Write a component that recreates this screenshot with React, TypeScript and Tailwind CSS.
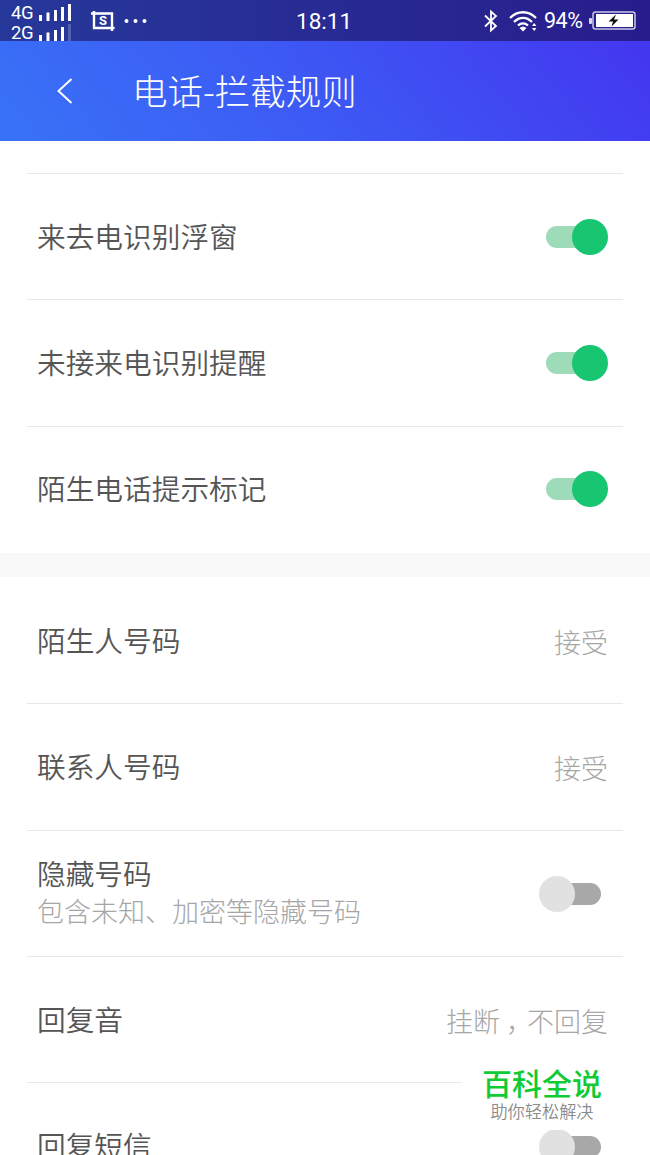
import type { ReactNode } from "react"

type RowProps = {
	label: string
	hint?: string
	value?: ReactNode
	checked?: boolean
	first?: boolean
}

const Toggle = ({ checked }: { checked: boolean }) => {
	if (checked) {
		return (
			<div className="relative mr-px flex h-9 w-[62px] items-center">
				<div className="h-[22px] w-[50px] rounded-full bg-[#9ddbb9]"></div>
				<div className="absolute right-0 size-9 rounded-full bg-[#18c571]"></div>
			</div>
		)
	}
	return (
		<div className="relative mt-px mr-2 flex h-9 w-[62px] items-center justify-end">
			<div className="h-[22px] w-[50px] rounded-full bg-[#a8a8a8]"></div>
			<div className="absolute left-0 size-9 rounded-full bg-[#e1e1e1]"></div>
		</div>
	)
}

const Row = ({ label, hint, value, checked, first }: RowProps) => {
	return (
		<div className={`flex h-[126.35px] shrink-0 items-center justify-between border-t pr-[14px] pl-[10px] ${first ? "border-transparent" : "border-[#e8e8e8]"}`}>
			<div className="pb-[2px]">
				<p className="text-[28.7px] leading-[38px] font-[350] text-[#555]">{label}</p>
				{hint && <p className="text-[27px] leading-[38px] text-[#a6a6a6]">{hint}</p>}
			</div>
			{value && <span className="mr-px pt-[2px] text-[27px] leading-[38px] text-[#a6a6a6]">{value}</span>}
			{checked !== undefined && <Toggle checked={checked} />}
		</div>
	)
}

const Signal = ({ name, weak }: { name: string, weak?: boolean }) => {
	return (
		<div className="flex h-5 items-center gap-[6px]">
			<span className="w-[23px] text-right text-[18.5px] leading-5 tracking-[-0.5px]">{name}</span>
			<svg width="33" height="18" viewBox="0 0 33 18" fill="currentColor">
				<rect x="0" y="11" width="3" height="6" />
				<rect x="7.500" y="8.500" width="3" height="8.500" />
				<rect x="15" y="6" width="3" height="11" />
				<rect x="22" y="3" width="3" height="14" />
				<rect x="29" y="0" width="3" height="17" opacity={weak ? 0.22 : 1} />
			</svg>
		</div>
	)
}

const StatusBar = () => {
	return (
		<div className="relative flex h-[41px] items-center justify-between bg-linear-to-r from-[#26389a] to-[#281c8c] pr-[14px] pl-[10px] font-['Roboto',sans-serif] font-normal">
			<div className="flex items-center">
				<div className="h-[41px] pt-[3px]">
					<Signal name="4G" />
					<Signal name="2G" weak />
				</div>
				<svg className="ml-[19px]" width="24" height="22" viewBox="0 0 24 22" fill="none" stroke="currentColor" strokeWidth="2.400">
					<path d="M0 3.500H21V21M3 1V18H23.500" />
					<text x="12" y="15.300" textAnchor="middle" fontSize="13" fontWeight="700" fill="currentColor" stroke="none">S</text>
				</svg>
				<svg className="ml-[9px]" width="24" height="4" viewBox="0 0 24 4" fill="currentColor">
					<circle cx="2.500" cy="2" r="2" />
					<circle cx="11.500" cy="2" r="2" />
					<circle cx="20.500" cy="2" r="2" />
				</svg>
			</div>
			<span className="absolute left-[296px] text-[22.5px] leading-[42px]">18:11</span>
			<div className="flex items-center">
				<svg width="14" height="24" viewBox="0 0 14 24" fill="none" stroke="currentColor" strokeWidth="1.8">
					<path d="M1 6.500L12 17L7 21.500V2.500L12 7L1 17.500" />
				</svg>
				<svg className="ml-[11px]" width="29" height="22" viewBox="0 0 29 22" fill="none" stroke="currentColor" strokeWidth="2.300">
					<path d="M1 8C8.500 0.300 19.500 0.300 27 8M5 12C10.500 6.500 17.500 6.500 23 12M9 15.500C12 12.800 16 12.800 19 15.500" />
					<path d="M10.500 18Q14 15 17.500 18L14 21.500Z" fill="currentColor" stroke="none" />
					<path d="M23 16L25.200 13L27.400 16ZM23 18L25.200 21L27.400 18Z" fill="currentColor" stroke="none" />
				</svg>
				<span className="ml-[6px] w-[43px] text-[21.5px] leading-[42px] tracking-[-0.5px]">94%</span>
				<svg className="ml-[2px]" width="47" height="20" viewBox="0 0 47 20">
					<rect x="0" y="7" width="3" height="6" rx="1" fill="#d9d8ef" />
					<rect x="4" y="1" width="42" height="17" rx="2.500" fill="none" stroke="#c9c7e8" strokeWidth="1.500" />
					<rect x="7" y="3" width="37" height="13" fill="#fff" />
					<path d="M27 3.500L19.500 10.500H24L22.500 15.500L29.500 8.500H25Z" fill="#111" />
				</svg>
			</div>
		</div>
	)
}

export default function App() {
	return (
		<main className="relative flex h-[1155px] w-[650px] flex-col overflow-hidden bg-white font-['Noto_Sans_CJK_SC',sans-serif] font-light">
			<header className="h-[141px] shrink-0 bg-linear-[50deg,#3873f7_0%,#3d59f4_45%,#4433ef_100%] text-white">
				<StatusBar />
				<div className="flex h-[100px] items-center pl-[57px]">
					<svg width="16" height="26" viewBox="0 0 16 26" fill="none" stroke="currentColor" strokeWidth="2">
						<path d="M14.500 1L1.500 13L14.500 25" />
					</svg>
					<h1 className="ml-[59px] pb-[2px] text-[35.5px] leading-[50px]">电话-拦截规则</h1>
				</div>
			</header>
			<section className="shrink-0 px-[27px] pt-8">
				<Row label="来去电识别浮窗" checked />
				<Row label="未接来电识别提醒" checked />
				<Row label="陌生电话提示标记" checked />
			</section>
			<div className="mt-[1px] h-6 shrink-0 bg-[#f9f9f9]"></div>
			<section className="shrink-0 px-[27px]">
				<Row label="陌生人号码" value="接受" first />
				<Row label="联系人号码" value="接受" />
				<Row label="隐藏号码" hint="包含未知、加密等隐藏号码" checked={false} />
				<Row label="回复音" value={<>挂断<span className="relative left-[6px]">，</span>不回复</>} />
				<Row label="回复短信" checked={false} />
			</section>
			<div className="absolute top-[1058px] left-[462px] flex h-[72px] w-[163px] flex-col items-center bg-white pt-[6px] pr-[3px]">
				<p className="text-[30px] leading-[36px] font-medium text-[#10cb33]">百科全说</p>
				<p className="mt-px text-[17.200px] leading-[20px] font-[350] text-[#8c8c8c]">助你轻松解决</p>
			</div>
		</main>
	)
}
